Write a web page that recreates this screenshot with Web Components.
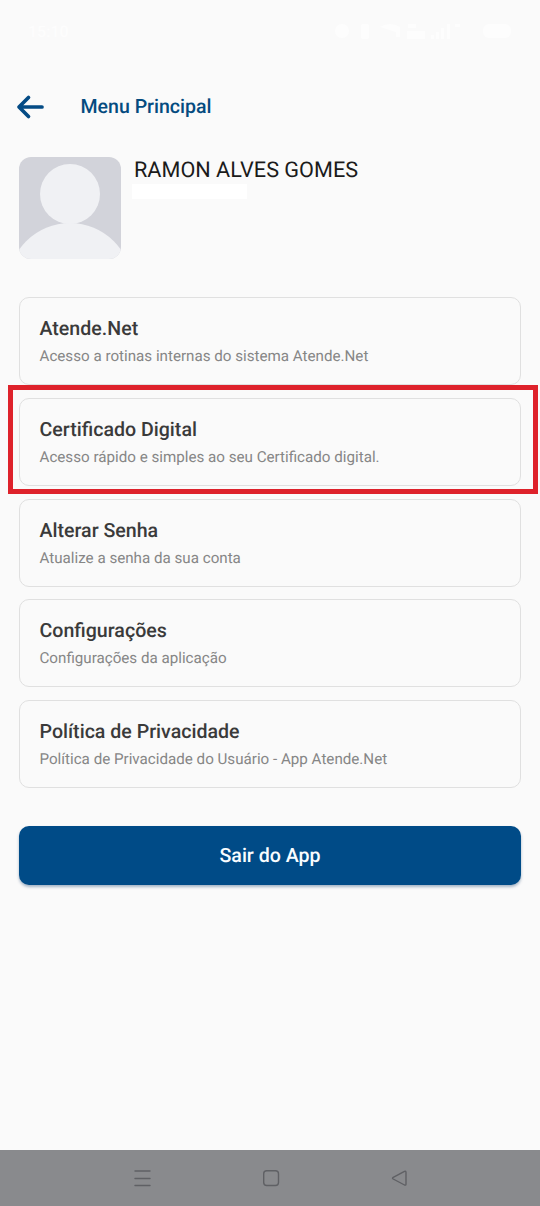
<!DOCTYPE html>
<html lang="pt-BR">
<head>
<meta charset="utf-8">
<title>Menu Principal</title>
<style>
html,body{margin:0;height:100%;background:#fafafa}
body{font-family:Roboto,"Liberation Sans",sans-serif;overflow:hidden;text-rendering:geometricPrecision}
</style>
</head>
<body>
<app-screen>
  <status-bar slot="status">15:10</status-bar>
  <app-header>Menu Principal</app-header>
  <user-profile>RAMON ALVES GOMES</user-profile>
  <menu-list>
    <menu-card><span slot="title">Atende.Net</span>Acesso a rotinas internas do sistema Atende.Net</menu-card>
    <menu-card highlighted><span slot="title">Certificado Digital</span>Acesso rápido e simples ao seu Certificado digital.</menu-card>
    <menu-card><span slot="title">Alterar Senha</span>Atualize a senha da sua conta</menu-card>
    <menu-card><span slot="title">Configurações</span>Configurações da aplicação</menu-card>
    <menu-card><span slot="title">Política de Privacidade</span>Política de Privacidade do Usuário - App Atende.Net</menu-card>
  </menu-list>
  <primary-button>Sair do App</primary-button>
  <nav-bar slot="nav"></nav-bar>
</app-screen>
<script>
function define(name, html){
  const t = document.createElement('template');
  t.innerHTML = html;
  customElements.define(name, class extends HTMLElement{
    constructor(){
      super();
      this.attachShadow({mode:'open'}).appendChild(t.content.cloneNode(true));
    }
  });
}

define('app-screen', `<style>
:host{display:flex;flex-direction:column;width:540px;height:1206px;background:#fafafa}
main{flex:1;min-height:0;padding:0 19px}
</style><slot name="status"></slot><main><slot></slot></main><slot name="nav"></slot>`);

define('status-bar', `<style>
:host{display:flex;align-items:center;justify-content:space-between;height:62px;box-sizing:border-box;padding:0 27px 0 28px;color:#fdfdfd;font-size:16px;font-weight:500}
svg{display:block;fill:#fdfdfd}
</style><span><slot></slot></span>
<svg width="180" height="24" viewBox="0 0 180 24">
<circle cx="9" cy="12" r="7"/><rect x="28" y="5" width="8" height="15" rx="2"/>
<path d="M47 8q10-6 20 0v10h-4v-5z"/>
<path d="M75 5h8v4h-8zM74 12h18v8h-18zM98 16h3v4h-3zM103 13h3v7h-3zM108 9h3v11h-3zM114 5h3v15h-3zM122 5h5v3h-5z"/>
<rect x="150" y="5" width="28" height="14" rx="6"/></svg>`);

define('app-header', `<style>
:host{display:flex;align-items:center;height:90px;color:#044b7f;font-size:19.550px;font-weight:500}
svg{display:block;margin-left:-3px;margin-right:35.500px}
span{padding-bottom:1px}
</style><svg width="29" height="26" viewBox="0 0 29 26" fill="none" stroke="#044b85" stroke-width="3.700" stroke-linecap="round" stroke-linejoin="round"><path d="M12.500 3.500 3 13l9.500 9.500M4 13H26"/></svg><span><slot></slot></span>`);

define('user-profile', `<style>
:host{display:flex;height:102px;margin-top:5px;gap:13px}
svg{display:block;border-radius:12px}
.name{padding-top:1px;font-size:21.670px;line-height:26px;color:#1b1b1b;white-space:nowrap}
.id{width:115px;height:15px;margin:0 0 0 -2px;background:#fff}
</style><svg width="102" height="102" viewBox="0 0 102 102"><rect width="102" height="102" fill="#d2d3da"/><g fill="#f0f1f4"><circle cx="51" cy="37" r="30"/><circle cx="51" cy="128" r="62"/></g></svg>
<div><div class="name"><slot></slot></div><div class="id"></div></div>`);

define('menu-list', `<style>
:host{display:flex;flex-direction:column;gap:12.800px;margin-top:38px}
</style><slot></slot>`);

define('menu-card', `<style>
:host{display:flex;flex-direction:column;position:relative;height:88px;box-sizing:border-box;padding:18px 20px 0 19.500px;border:1px solid #e0e0e0;border-radius:10px}
.title{font-size:19.600px;line-height:25px;font-weight:500;color:#3a3a3a}
.text{font-size:15.170px;line-height:20px;margin-top:5px;color:#868686;white-space:nowrap}
.frame{display:none}
:host([highlighted]) .frame{display:block;position:absolute;z-index:1;left:-12px;right:-18px;top:-14px;bottom:-9px;border:5px solid #de222b;pointer-events:none}
</style><div class="title"><slot name="title"></slot></div><div class="text"><slot></slot></div><div class="frame"></div>`);

define('primary-button', `<style>
:host{display:flex;align-items:center;justify-content:center;height:59px;box-sizing:border-box;padding-bottom:1px;margin-top:38px;border-radius:10px;background:#004b87;color:#fafdff;font-size:19.600px;font-weight:500;box-shadow:0 2px 3px rgba(0,50,100,.35)}
</style><slot></slot>`);

define('nav-bar', `<style>
:host{display:flex;height:56px;align-items:center;background:#898a8d;padding-left:133px;gap:109px}
svg{display:block;fill:none;stroke:#5f6064;stroke-width:1.400;stroke-linejoin:round;stroke-linecap:round}
</style><svg width="19" height="20" viewBox="0 0 19 20"><path d="M2 3H17M2 10.500H17M2 17.500H17"/></svg>
<svg width="20" height="20" viewBox="0 0 20 20"><rect x="2.700" y="2.700" width="14.800" height="14.800" rx="3"/></svg>
<svg width="20" height="20" viewBox="0 0 20 20"><path d="M3.200 9.300 14.500 3.300Q16 2.800 16 4.500V16Q16 17.600 14.500 17L3.200 11Q1.800 10.200 3.200 9.300Z"/></svg>`);
</script>
</body>
</html>
